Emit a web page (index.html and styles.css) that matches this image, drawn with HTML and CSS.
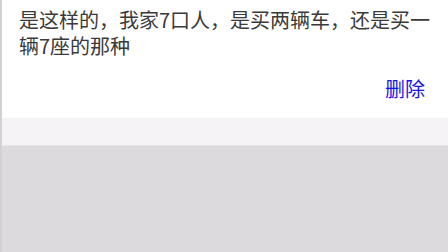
FILE: index.html
```html
<!DOCTYPE html>
<html lang="zh">
<head>
<meta charset="utf-8">
<link rel="stylesheet" href="styles.css">
</head>
<body>
<div class="page">
  <div class="card">
    <p class="msg">是这样的，我家7口人，是买两辆车，还是买一辆7座的那种</p>
    <div class="actions"><span class="del">删除</span></div>
  </div>
  <div class="strip"></div>
  <div class="rest"></div>
</div>
</body>
</html>
```
FILE: styles.css
```css
html, body {
  margin: 0;
  padding: 0;
  height: 100%;
}
body {
  font-family: "Noto Sans CJK SC", "Noto Sans", sans-serif;
  background: #dcdadd;
}
.page {
  display: flex;
  flex-direction: column;
  height: 252px;
  border-left: 2px solid #d2d0d3;
}
.card {
  background: #ffffff;
  height: 118px;
  box-sizing: border-box;
  padding: 7px 10px 0 17px;
  display: flex;
  flex-direction: column;
}
.msg {
  margin: 0;
  font-size: 20px;
  line-height: 26px;
  color: #3a3a3a;
}
.actions {
  display: flex;
  justify-content: flex-end;
  margin-top: 17px;
  padding-right: 13px;
}
.del {
  font-size: 20px;
  line-height: 26px;
  color: #1414f0;
}
.strip {
  height: 27px;
  background: #f6f3f6;
  border-bottom: 1px solid #e6e4e7;
}
.rest {
  flex: 1;
  background: #dcdadd;
}
```
